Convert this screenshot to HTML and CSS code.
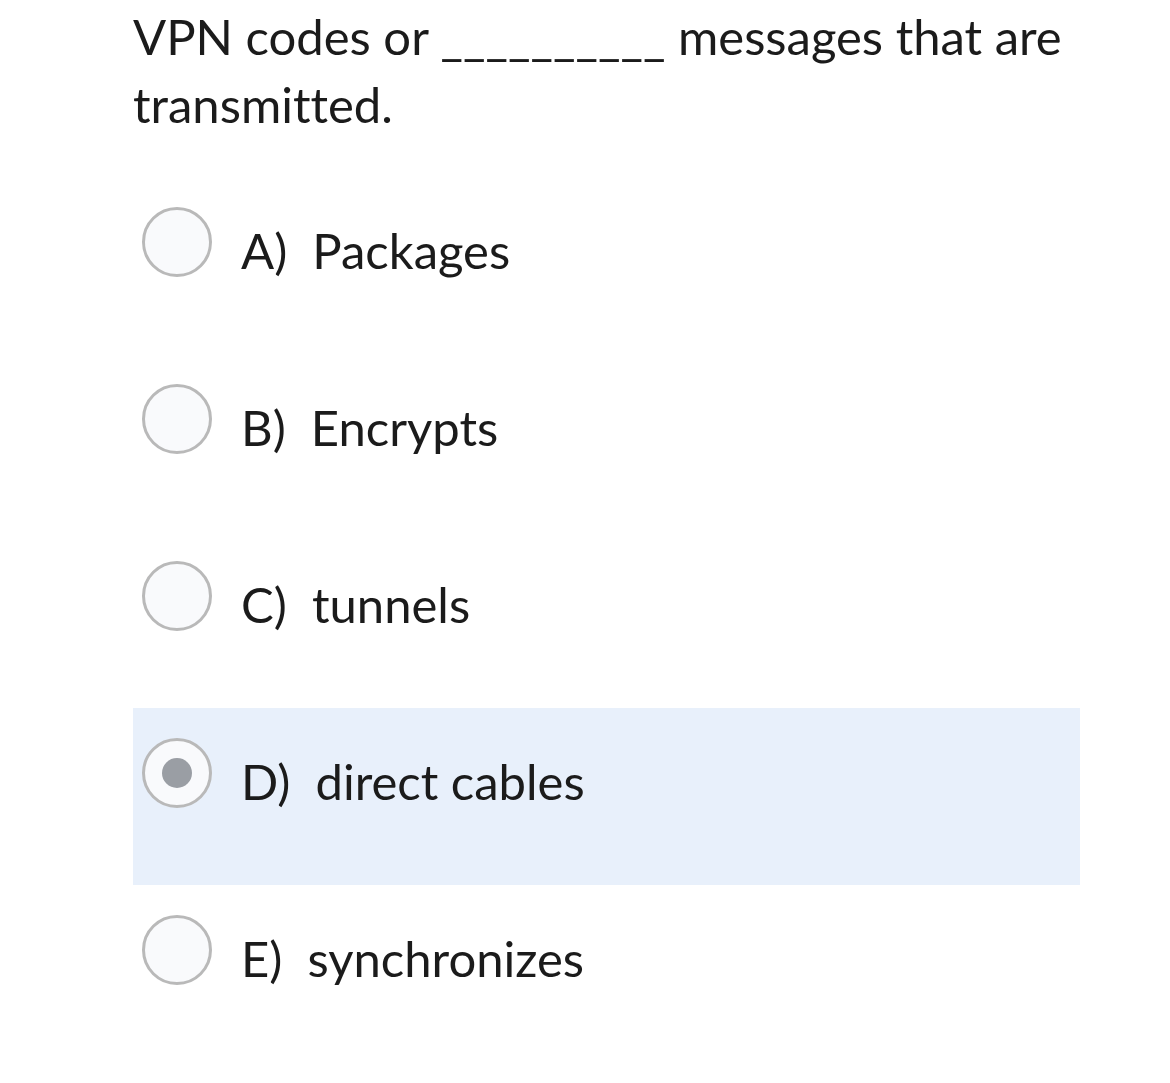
FILE: index.html
```html
<!DOCTYPE html>
<html>
<head>
<meta charset="utf-8">
<link rel="stylesheet" href="styles.css">
</head>
<body>
<div class="page">
  <p class="question">VPN codes or __________ messages that are transmitted.</p>
  <div class="options">
    <div class="option"><span class="radio"></span><span class="label">A)&nbsp; Packages</span></div>
    <div class="option"><span class="radio"></span><span class="label">B)&nbsp; Encrypts</span></div>
    <div class="option"><span class="radio"></span><span class="label">C)&nbsp; tunnels</span></div>
    <div class="option selected"><span class="radio"><span class="dot"></span></span><span class="label">D)&nbsp; direct cables</span></div>
    <div class="option"><span class="radio"></span><span class="label">E)&nbsp; synchronizes</span></div>
  </div>
</div>
</body>
</html>
```
FILE: styles.css
```css
html, body {
  margin: 0;
  padding: 0;
  background: #ffffff;
}
body {
  font-family: Lato, "Liberation Sans", sans-serif;
  color: #1b1b1b;
  font-variant-ligatures: none;
}
.page {
  width: 947px;
  margin-left: 133px;
}
.question {
  margin: 0;
  padding: 2px 0 0 0;
  font-size: 49px;
  line-height: 68px;
  height: 177px;
  box-sizing: border-box;
}
.options {
  display: flex;
  flex-direction: column;
}
.option {
  height: 177px;
  display: flex;
  align-items: flex-start;
  box-sizing: border-box;
  padding-top: 30px;
  padding-left: 9px;
}
.option.selected {
  background: #e8f0fb;
}
.radio {
  width: 70px;
  height: 70px;
  box-sizing: border-box;
  border: 3px solid #b9b9b9;
  border-radius: 50%;
  background: #f9fafc;
  flex: none;
  display: flex;
  align-items: center;
  justify-content: center;
}
.dot {
  width: 30px;
  height: 30px;
  border-radius: 50%;
  background: #9a9ea4;
}
.label {
  margin-left: 29px;
  margin-top: 8px;
  font-size: 49px;
  line-height: 70px;
  white-space: pre;
}
```
